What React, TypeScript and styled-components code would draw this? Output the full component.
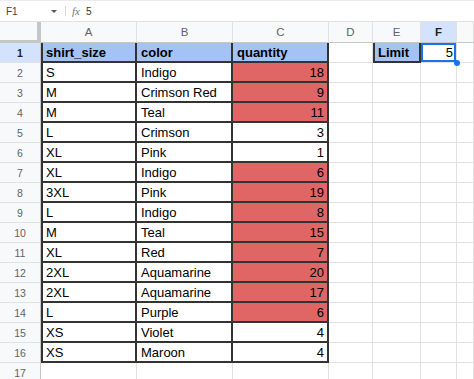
import React from 'react';
import styled, { createGlobalStyle, css } from 'styled-components';

const Global = createGlobalStyle`
  html, body { margin: 0; padding: 0; background: #fff; overflow: hidden; }
  body { font-family: 'Liberation Sans', Arial, sans-serif; }
`;

const Page = styled.div`
  width: 474px;
  height: 379px;
  overflow: hidden;
  background: #fff;
`;

const FormulaBar = styled.div`
  height: 22px;
  box-sizing: border-box;
  display: flex;
  align-items: center;
  border-top: 1px solid #ececec;
  border-bottom: 1px solid #e1e1e1;
  font-family: 'Liberation Sans', Arial, sans-serif;
  color: #444;
`;

const NameBox = styled.div`
  width: 44px;
  padding-left: 6px;
  font-size: 10px;
  color: #444;
`;

const Caret = styled.span`
  width: 0;
  height: 0;
  border-left: 3px solid transparent;
  border-right: 3px solid transparent;
  border-top: 3px solid #555;
  margin-left: 1px;
  margin-top: 1px;
`;

const Divider = styled.span`
  width: 1px;
  height: 10px;
  background: #d8d8d8;
  margin: 0 6px 0 8px;
`;

const Fx = styled.span`
  font-family: 'Liberation Serif', 'Times New Roman', serif;
  font-style: italic;
  font-size: 11px;
  color: #777;
  margin-right: 6px;
`;

const FormulaValue = styled.span`
  font-size: 10px;
  color: #333;
`;

const Grid = styled.div`
  display: grid;
  grid-template-columns: 41px 96px 96px 96px 44px 48px 36px 1fr;
  grid-template-rows: 21px repeat(17, 20px);
`;

const Corner = styled.div`
  box-sizing: border-box;
  background: #f8f9fa;
  border-right: 4px solid #c4c7c5;
  border-bottom: 3px solid #c4c7c5;
`;

const ColHead = styled.div<{ $active?: boolean }>`
  box-sizing: border-box;
  display: flex;
  align-items: center;
  justify-content: center;
  background: ${p => (p.$active ? '#d3e3fd' : '#f8f9fa')};
  color: ${p => (p.$active ? '#1f1f1f' : '#5f6368')};
  font-weight: ${p => (p.$active ? 700 : 400)};
  font-size: 11.5px;
  border-right: 1px solid #e1e1e1;
  border-bottom: 1px solid #c4c7c5;
`;

const RowHead = styled.div<{ $active?: boolean }>`
  box-sizing: border-box;
  display: flex;
  align-items: center;
  justify-content: center;
  background: ${p => (p.$active ? '#d3e3fd' : '#f8f9fa')};
  color: ${p => (p.$active ? '#1f1f1f' : '#5f6368')};
  font-weight: ${p => (p.$active ? 700 : 400)};
  font-size: 10.5px;
  border-right: 1px solid #c4c7c5;
  border-bottom: 1px solid #e1e1e1;
`;

const LINE = '2px solid #333';
const GRID_LINE = '1px solid #e1e1e1';

const Cell = styled.div<{
  $fill?: string;
  $box?: boolean;
  $left?: boolean;
  $right?: boolean;
  $bold?: boolean;
  $selected?: boolean;
}>`
  position: relative;
  box-sizing: border-box;
  display: flex;
  align-items: center;
  justify-content: ${p => (p.$right ? 'flex-end' : 'flex-start')};
  padding: ${p => (p.$left ? '0 3px 0 5px' : '0 3px 0 4px')};
  background: ${p => p.$fill ?? '#fff'};
  border-right: ${p => (p.$box ? LINE : GRID_LINE)};
  border-bottom: ${p => (p.$box ? LINE : GRID_LINE)};
  box-shadow: ${p => (p.$left ? 'inset 2px 0 0 #333' : 'none')};
  font-family: 'Liberation Sans', Arial, sans-serif;
  font-size: 13px;
  font-weight: ${p => (p.$bold ? 700 : 400)};
  color: #000;
  white-space: nowrap;
  ${p =>
    p.$selected &&
    css`
      z-index: 2;
      box-shadow: inset 0 0 0 2px #1a73e8;
      &::after {
        content: '';
        position: absolute;
        right: -4px;
        bottom: -4px;
        width: 6px;
        height: 6px;
        border-radius: 50%;
        background: #1a73e8;
      }
    `}
`;

const HEADER_BLUE = '#a4c2f4';
const RED = '#e06666';

type Row = [string, string, number];

const rows: Row[] = [
  ['S', 'Indigo', 18],
  ['M', 'Crimson Red', 9],
  ['M', 'Teal', 11],
  ['L', 'Crimson', 3],
  ['XL', 'Pink', 1],
  ['XL', 'Indigo', 6],
  ['3XL', 'Pink', 19],
  ['L', 'Indigo', 8],
  ['M', 'Teal', 15],
  ['XL', 'Red', 7],
  ['2XL', 'Aquamarine', 20],
  ['2XL', 'Aquamarine', 17],
  ['L', 'Purple', 6],
  ['XS', 'Violet', 4],
  ['XS', 'Maroon', 4],
];

const LIMIT = 5;
const columns = ['A', 'B', 'C', 'D', 'E', 'F', ''];

export default function App() {
  return (
    <Page>
      <Global />
      <FormulaBar>
        <NameBox>F1</NameBox>
        <Caret />
        <Divider />
        <Fx>fx</Fx>
        <FormulaValue>{LIMIT}</FormulaValue>
      </FormulaBar>
      <Grid>
        <Corner />
        {columns.map((c, i) => (
          <ColHead key={i} $active={c === 'F'}>
            {c}
          </ColHead>
        ))}

        <RowHead $active>1</RowHead>
        <Cell $box $left $bold $fill={HEADER_BLUE}>shirt_size</Cell>
        <Cell $box $bold $fill={HEADER_BLUE}>color</Cell>
        <Cell $box $bold $fill={HEADER_BLUE}>quantity</Cell>
        <Cell />
        <Cell $box $left $bold $fill={HEADER_BLUE}>Limit</Cell>
        <Cell $right $selected>{LIMIT}</Cell>
        <Cell />

        {rows.map(([size, color, qty], i) => (
          <React.Fragment key={i}>
            <RowHead>{i + 2}</RowHead>
            <Cell $box $left>{size}</Cell>
            <Cell $box>{color}</Cell>
            <Cell $box $right $fill={qty > LIMIT ? RED : undefined}>
              {qty}
            </Cell>
            <Cell />
            <Cell />
            <Cell />
            <Cell />
          </React.Fragment>
        ))}

        <RowHead>17</RowHead>
        {columns.map((_, i) => (
          <Cell key={i} />
        ))}
      </Grid>
    </Page>
  );
}
